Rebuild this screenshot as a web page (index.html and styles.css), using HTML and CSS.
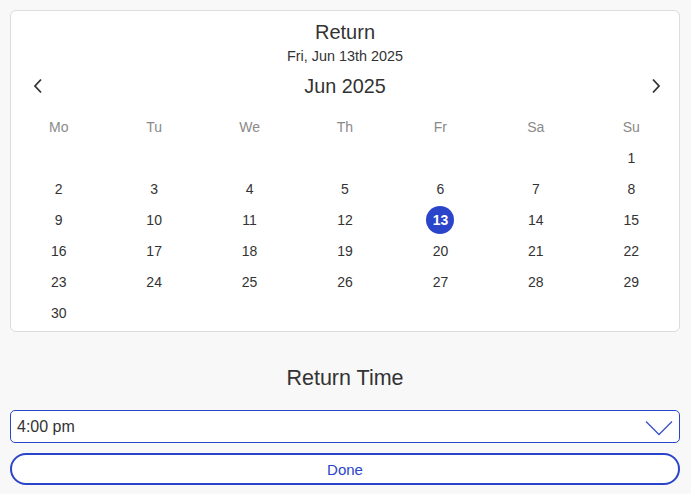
FILE: index.html
```html
<!DOCTYPE html>
<html>
<head>
<meta charset="utf-8">
<link rel="stylesheet" href="styles.css">
</head>
<body>
<div class="page">
  <div class="card">
    <div class="title">Return</div>
    <div class="subtitle">Fri, Jun 13th 2025</div>
    <div class="month-row">
      <span class="nav nav-prev"><svg width="10" height="16" viewBox="0 0 10 16"><path d="M8 1.5 L2 8 L8 14.5" fill="none" stroke="#333" stroke-width="1.8"/></svg></span>
      <span class="month">Jun 2025</span>
      <span class="nav nav-next"><svg width="10" height="16" viewBox="0 0 10 16"><path d="M2 1.5 L8 8 L2 14.5" fill="none" stroke="#333" stroke-width="1.8"/></svg></span>
    </div>
    <div class="grid">
      <div class="wd">Mo</div><div class="wd">Tu</div><div class="wd">We</div><div class="wd">Th</div><div class="wd">Fr</div><div class="wd">Sa</div><div class="wd">Su</div>
      <div class="d"></div><div class="d"></div><div class="d"></div><div class="d"></div><div class="d"></div><div class="d"></div><div class="d">1</div>
      <div class="d">2</div><div class="d">3</div><div class="d">4</div><div class="d">5</div><div class="d">6</div><div class="d">7</div><div class="d">8</div>
      <div class="d">9</div><div class="d">10</div><div class="d">11</div><div class="d">12</div><div class="d"><span class="sel">13</span></div><div class="d">14</div><div class="d">15</div>
      <div class="d">16</div><div class="d">17</div><div class="d">18</div><div class="d">19</div><div class="d">20</div><div class="d">21</div><div class="d">22</div>
      <div class="d">23</div><div class="d">24</div><div class="d">25</div><div class="d">26</div><div class="d">27</div><div class="d">28</div><div class="d">29</div>
      <div class="d">30</div>
    </div>
  </div>
  <div class="time-title">Return Time</div>
  <div class="select">
    <span class="select-value">4:00 pm</span>
    <svg class="chev" width="28" height="16" viewBox="0 0 28 16"><path d="M1 1.5 L14 14.5 L27 1.5" fill="none" stroke="#3a52c9" stroke-width="1.3"/></svg>
  </div>
  <div class="done">Done</div>
</div>
</body>
</html>
```
FILE: styles.css
```css
html, body {
  margin: 0;
  padding: 0;
  background: #f8f8f8;
  font-family: "Liberation Sans", Arial, sans-serif;
  color: #333;
}
.page {
  width: 691px;
  height: 494px;
  padding: 10px 11px 0 10px;
  box-sizing: border-box;
}
.card {
  background: #fff;
  border: 1px solid #dcdcdc;
  border-radius: 6px;
  padding: 9px 0 3px 0;
}
.title {
  text-align: center;
  font-size: 20px;
  line-height: 24px;
  color: #333;
}
.subtitle {
  text-align: center;
  font-size: 14.4px;
  line-height: 24px;
  color: #333;
}
.month-row {
  display: flex;
  align-items: center;
  height: 36px;
  padding: 0 11px 0 15px;
}
.nav {
  width: 24px;
  display: flex;
  justify-content: center;
  align-items: center;
}
.month {
  flex: 1;
  text-align: center;
  font-size: 19.8px;
  padding-right: 4px;
}
.grid {
  margin-top: 7px;
  display: grid;
  grid-template-columns: repeat(7, 1fr);
  grid-auto-rows: 31px;
}
.wd, .d {
  display: flex;
  align-items: center;
  justify-content: center;
  font-size: 14px;
}
.wd {
  color: #8a8a8a;
}
.d {
  color: #333;
}
.sel {
  width: 28px;
  height: 28px;
  border-radius: 50%;
  background: #2a45c9;
  color: #fff;
  font-weight: bold;
  display: flex;
  align-items: center;
  justify-content: center;
}
.time-title {
  margin-top: 31px;
  text-align: center;
  font-size: 21.5px;
  line-height: 30px;
  color: #333;
}
.select {
  margin-top: 17px;
  height: 33px;
  box-sizing: border-box;
  border: 1px solid #2b47c9;
  border-radius: 5px;
  background: #fff;
  display: flex;
  align-items: center;
  justify-content: space-between;
  padding: 0 6px 0 6px;
}
.select-value {
  font-size: 16px;
  color: #333;
}
.chev {
  display: block;
  margin-top: 2px;
}
.done {
  margin-top: 10px;
  height: 32px;
  box-sizing: border-box;
  border: 2px solid #2a45c9;
  border-radius: 16px;
  background: #fff;
  color: #2a45c9;
  font-size: 15px;
  display: flex;
  align-items: center;
  justify-content: center;
}
```
